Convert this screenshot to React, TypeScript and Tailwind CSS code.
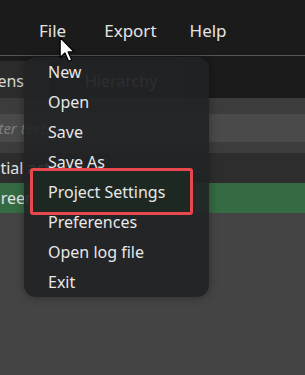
import React from "react";

const menuItems = [
  "New",
  "Open",
  "Save",
  "Save As",
  "Project Settings",
  "Preferences",
  "Open log file",
  "Exit",
];

function Cursor() {
  return (
    <svg width="16" height="27" viewBox="0 0 14 23" className="absolute left-[59px] top-[36px] z-30">
      <path
        d="M1 1 L1 18.5 L5.2 14.6 L8.4 21.8 L11.2 20.6 L8 13.6 L13.2 13.6 Z"
        fill="#ffffff"
        stroke="#000000"
        strokeWidth="1.1"
        strokeLinejoin="round"
      />
    </svg>
  );
}

function FileMenu() {
  return (
    <div className="absolute left-[24px] top-[57px] w-[185px] rounded-[12px] bg-[#212224]/90 shadow-[0_0_10px_rgba(0,0,0,0.35)] z-20">
      {menuItems.map((item) => (
        <div key={item} className="relative h-[30px] flex items-center pl-[24px] text-[16px] text-[#e8e8e8]">
          {item === "Project Settings" && (
            <span className="absolute left-[6px] top-[-9px] w-[163px] h-[47px] rounded-[3px] border-[3px] border-[#e8484d] bg-[#1e2822]" />
          )}
          <span className="relative">{item}</span>
        </div>
      ))}
    </div>
  );
}

export default function App() {
  return (
    <main
      className="relative w-[305px] h-[375px] overflow-hidden bg-[#444444] text-[#e6e6e6]"
      style={{ fontFamily: '"Noto Sans", "Open Sans", sans-serif' }}
    >
      {/* menu bar */}
      <div className="h-[55px] bg-[#1b1b1b] flex items-center pt-[6px] text-[17px] text-[#e4e4e4]">
        <span className="ml-[39px]">File</span>
        <span className="ml-[38px]">Export</span>
        <span className="ml-[33px]">Help</span>
      </div>
      <div className="h-px bg-[#565656]" />

      {/* tab strip */}
      <div className="h-[42px] bg-[#1b1b1b] flex items-end">
        <div className="w-[50px] h-[37px] shrink-0 overflow-hidden rounded-tr-[8px] bg-[#2c2c2c] flex items-center justify-end pr-[26px] pt-[2px] text-[16px] text-[#d8d8d8] whitespace-nowrap">
          Screens
        </div>
        <div className="ml-[8px] w-[125px] h-[37px] rounded-t-[10px] bg-[#262626] flex items-center pl-[27px] pt-[2px] text-[16px] text-[#9a9a9a]">
          Hierarchy
        </div>
      </div>

      {/* panel */}
      <div className="bg-[#3c3c3c] pt-[16px] pb-[11px]">
        <div className="h-[28px] bg-[#4a4a4a] flex items-center text-[15px] italic text-[#808080] whitespace-nowrap">
          <span className="-ml-[18px]">Enter text...</span>
        </div>
      </div>
      <div className="h-[30px] bg-[#2d2d2d] flex items-center text-[16px] text-[#e4e4e4] whitespace-nowrap">
        <span className="-ml-[19px]">Initial actions</span>
      </div>
      <div className="h-[30px] bg-[#356b43] flex items-center text-[16px] text-[#e4e4e4] whitespace-nowrap">
        <span className="-ml-[11px]">Green</span>
      </div>

      <FileMenu />
      <Cursor />
    </main>
  );
}
